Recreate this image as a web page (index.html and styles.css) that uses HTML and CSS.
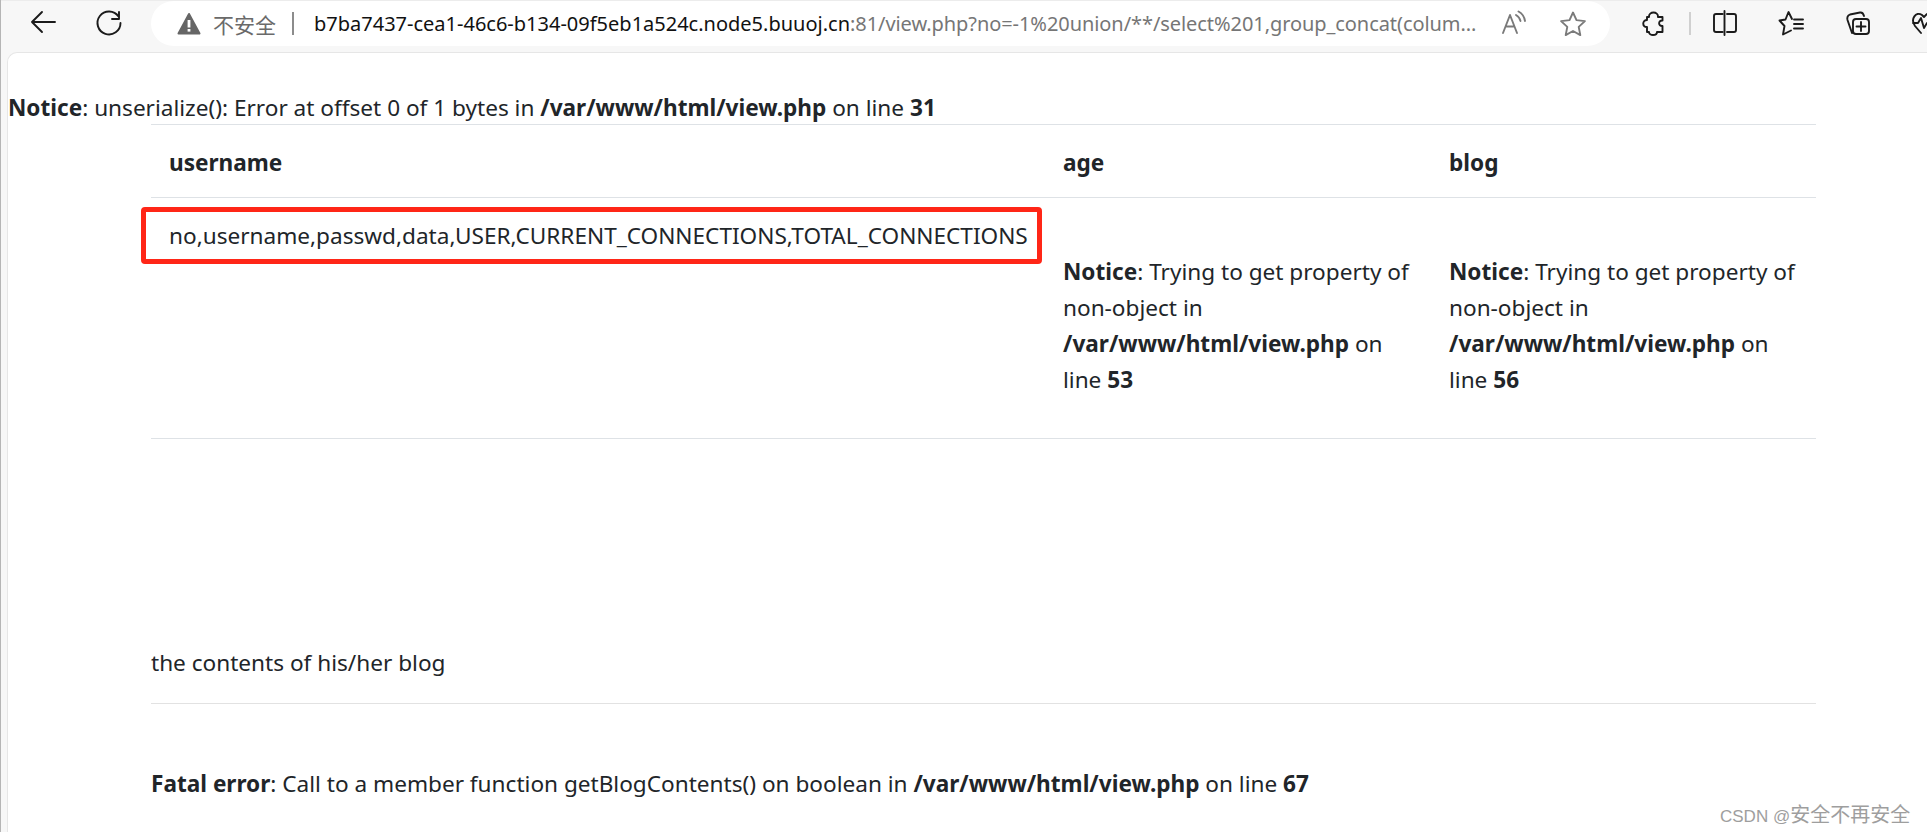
FILE: index.html
```html
<!DOCTYPE html>
<html lang="zh">
<head>
<meta charset="utf-8">
<title>view.php</title>
<link rel="stylesheet" href="styles.css">
</head>
<body>
<header class="toolbar">
  <svg class="icon first" viewBox="0 0 28 28"><path class="dark" d="M3 13H26M13 3L3 13L13 23"/></svg>
  <svg class="icon" viewBox="0 0 28 28"><path class="dark" d="M25.5 14A11.5 11.5 0 1 1 23.5 7.5M24 3V10H17"/></svg>
  <div class="address">
    <svg class="warn" viewBox="0 0 24 24"><path class="warn-fill" d="M12 2L22.5 21.5H1.5Z"/><rect class="warn-mark" x="10.6" y="8" width="2.8" height="7.5"/><rect class="warn-mark" x="10.6" y="17" width="2.8" height="2.6"/></svg>
    <span class="insecure">不安全</span>
    <span class="divider"></span>
    <span class="url"><span class="host">b7ba7437-cea1-46c6-b134-09f5eb1a524c.node5.buuoj.cn</span>:81/view.php?no=-1%20union/**/select%201,group_concat(colum...</span>
    <svg class="icon aloud" viewBox="0 0 28 28"><path class="gray" d="M4 23L11 5L18 23M6.8 16.5H15.2M17 5Q20.5 7 21.5 11M19.5 1.5Q25 4.5 26 11"/></svg>
    <svg class="icon star" viewBox="0 0 28 28"><path class="gray" d="M14 2.5L17.5 10.1L25.9 11.1L19.7 16.9L21.3 25.1L14 21L6.7 25.1L8.3 16.9L2.1 11.1L10.5 10.1Z"/></svg>
  </div>
  <svg class="icon ext" viewBox="0 0 28 28"><path class="dark" d="M10 8C9.5 2 19.5 2 19 8H23.5V11.5C19 11 19 17.5 23.5 17V23H18C18 27 10 27 10 23H8V18C3 18 3 11 8 11V8Z"/></svg>
  <span class="sep"></span>
  <svg class="icon" viewBox="0 0 28 28"><path class="dark" d="M11.5 5H5A2 2 0 0 0 3 7V21A2 2 0 0 0 5 23H11.5M16 5H23A2 2 0 0 1 25 7V21A2 2 0 0 1 23 23H16M13.5 2V26"/></svg>
  <svg class="icon gap" viewBox="0 0 28 28"><path class="dark" d="M15 10L11.5 3L8.5 10.5L2.5 11.5L7.5 17L6 25.5L14 21.5M17 10.5H26M17 15H26M17 19.5H26"/></svg>
  <svg class="icon gap" viewBox="0 0 28 28"><path class="dark" d="M9 24L4.5 11Q3.5 7 7 5.5L17 3.5Q20 3 21 7M13 10H23A3 3 0 0 1 26 13V22A3 3 0 0 1 23 25H13A3 3 0 0 1 10 22V13A3 3 0 0 1 13 10ZM18 13V22M13.5 17.5H22.5"/></svg>
  <svg class="icon gap" viewBox="0 0 28 28"><path class="dark" d="M12 24L6 17C1 10 7 2 13 6L15 8L18 5C24 2 28 9 25 15M4 14H9L12 9L15 19L18 14H24"/><rect class="pulse" x="18" y="20" width="5" height="6"/></svg>
</header>

<main class="page">
  <p class="notice"><b>Notice</b>: unserialize(): Error at offset 0 of 1 bytes in <b>/var/www/html/view.php</b> on line <b>31</b></p>
  <section class="article">
    <table class="data">
      <thead>
        <tr><th class="c-name">username</th><th class="c-age">age</th><th class="c-blog">blog</th></tr>
      </thead>
      <tbody>
        <tr>
          <td class="first-cell">no,username,passwd,data,USER,CURRENT_CONNECTIONS,TOTAL_CONNECTIONS<span class="mark"></span></td>
          <td><br><b>Notice</b>: Trying to get property of non-object in <b>/var/www/html/view.php</b> on line <b>53</b></td>
          <td><br><b>Notice</b>: Trying to get property of non-object in <b>/var/www/html/view.php</b> on line <b>56</b></td>
        </tr>
      </tbody>
    </table>
    <p class="contents">the contents of his/her blog</p>
    <hr class="rule">
    <p class="fatal"><b>Fatal error</b>: Call to a member function getBlogContents() on boolean in <b>/var/www/html/view.php</b> on line <b>67</b></p>
  </section>
</main>
<div class="watermark"><span class="wm-latin">CSDN @</span><span class="wm-cjk">安全不再安全</span></div>
</body>
</html>
```
FILE: styles.css
```css
html, body {
  margin: 0;
  padding: 0;
  height: 100%;
  overflow: hidden;
}
body {
  width: 1927px;
  height: 832px;
  background: #f7f7f7;
  position: relative;
  border-left: 1px solid #b5b5b5;
  box-sizing: border-box;
  font-family: "Noto Sans", "Noto Sans CJK SC", sans-serif;
  color: #212529;
}
.toolbar {
  display: flex;
  align-items: flex-start;
  height: 52px;
  overflow: hidden;
  border-top: 1px solid #ececec;
  box-sizing: border-box;
}
.icon {
  width: 28px;
  height: 28px;
  flex: none;
  margin-top: 8px;
  margin-left: 38px;
  fill: none;
}
.icon.first { margin-left: 28px; }
.dark { stroke: #1b1b1b; stroke-width: 1.9; fill: none; stroke-linejoin: round; stroke-linecap: round; }
.gray { stroke: #7a7a7a; stroke-width: 1.9; fill: none; stroke-linejoin: round; stroke-linecap: round; }
.pulse { fill: #3c9a1c; stroke: none; }
.address {
  display: flex;
  align-items: center;
  flex: none;
  width: 1459px;
  height: 45px;
  margin-left: 28px;
  background: #fff;
  border-radius: 23px;
  box-sizing: border-box;
  padding-left: 26px;
}
.warn { width: 24px; height: 24px; flex: none; }
.warn-fill { fill: #666; stroke: #666; stroke-width: 2; stroke-linejoin: round; }
.warn-mark { fill: #fff; }
.insecure {
  margin-left: 12px;
  font-size: 21px;
  color: #6a6a6a;
  white-space: nowrap;
  font-family: "Noto Sans CJK SC", sans-serif;
}
.divider {
  width: 2px;
  height: 23px;
  margin-left: 16px;
  background: #8c8c8c;
  flex: none;
}
.url {
  width: 1164px;
  margin-left: 20px;
  flex: none;
  font-size: 20px;
  letter-spacing: -0.07px;
  white-space: nowrap;
  color: #767676;
}
.host { color: #111; letter-spacing: 0; }
.icon.aloud { margin: 0 0 0 21px; }
.icon.star { margin: 0 0 0 32px; }
.icon.ext { margin-left: 29px; }
.sep {
  width: 2px;
  height: 23px;
  margin: 11px 20px 0 22px;
  background: #d0d0d0;
  flex: none;
}
.sep + .icon { margin-left: 0; }
.page {
  margin-left: 6px;
  height: 780px;
  box-sizing: border-box;
  background: #fff;
  border-radius: 10px 0 0 0;
  border-top: 1px solid #e6e6e6;
  border-left: 1px solid #e6e6e6;
  font-size: 22.6px;
  line-height: 36px;
  padding-top: 37px;
}
.notice { margin: 0 0 -2px; white-space: nowrap; }
b, th { font-weight: 700; }
.article { margin-left: 143px; width: 1665px; }
.data {
  width: 1665px;
  table-layout: fixed;
  border-collapse: collapse;
}
.c-name { width: 894px; }
.c-age { width: 386px; }
.data th, .data td {
  box-sizing: border-box;
  padding: 20px 18px 16px;
  text-align: left;
  vertical-align: top;
}
.data th {
  border-top: 1px solid #dee2e6;
  border-bottom: 1px solid #dee2e6;
}
.data td {
  padding-bottom: 40px;
  border-bottom: 1px solid #dee2e6;
}
.first-cell { position: relative; white-space: nowrap; }
.mark {
  position: absolute;
  left: -10px;
  top: 9px;
  width: 901px;
  height: 57px;
  box-sizing: border-box;
  border: 5px solid #ff2617;
  border-radius: 4px;
}
.contents { margin: 206px 0 0; }
.rule {
  border: 0;
  border-top: 1px solid #e2e2e2;
  margin: 22px 0 0;
}
.fatal { margin: 62px 0 0; white-space: nowrap; }
.watermark {
  position: absolute;
  left: 1719px;
  top: 800px;
  line-height: 28px;
  color: #9e9e9e;
  white-space: nowrap;
}
.wm-latin { font-family: "Liberation Sans", sans-serif; font-size: 17px; }
.wm-cjk { font-family: "Noto Sans CJK SC", sans-serif; font-size: 20px; }
```
